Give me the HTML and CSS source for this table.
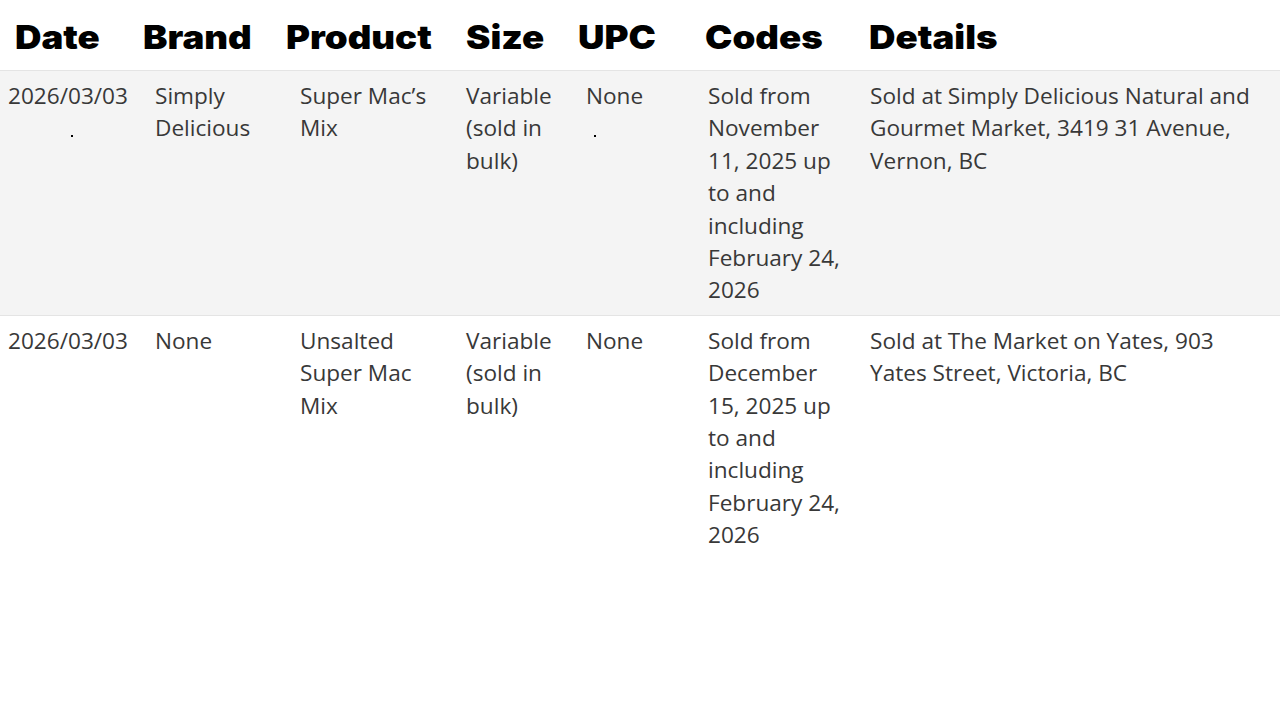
FILE: index.html
```html
<!DOCTYPE html>
<html lang="en">
<head>
<meta charset="utf-8">
<title>Recalls</title>
<link rel="stylesheet" href="styles.css">
</head>
<body>
<div class="table">
  <div class="head">
    <div class="h"><span class="ht">Date</span></div>
    <div class="h"><span class="ht">Brand</span></div>
    <div class="h"><span class="ht">Product</span></div>
    <div class="h"><span class="ht">Size</span></div>
    <div class="h"><span class="ht">UPC</span></div>
    <div class="h"><span class="ht">Codes</span></div>
    <div class="h"><span class="ht">Details</span></div>
  </div>
  <div class="row shaded">
    <div class="c">2026/03/03<span class="speck date-speck"></span></div>
    <div class="c">Simply Delicious</div>
    <div class="c">Super Mac’s Mix</div>
    <div class="c">Variable (sold in bulk)</div>
    <div class="c">None<span class="speck upc-speck"></span></div>
    <div class="c">Sold from November 11, 2025 up to and including February 24, 2026</div>
    <div class="c">Sold at Simply Delicious Natural and Gourmet Market, 3419 31 Avenue, Vernon, BC</div>
  </div>
  <div class="row last">
    <div class="c">2026/03/03</div>
    <div class="c">None</div>
    <div class="c">Unsalted Super Mac Mix</div>
    <div class="c">Variable (sold in bulk)</div>
    <div class="c">None</div>
    <div class="c">Sold from December 15, 2025 up to and including February 24, 2026</div>
    <div class="c">Sold at The Market on Yates, 903 Yates Street, Victoria, BC</div>
  </div>
</div>
</body>
</html>
```
FILE: styles.css
```css
html, body {
  margin: 0;
  padding: 0;
  background: #ffffff;
}
.table {
  width: 1280px;
}
.head {
  display: grid;
  grid-template-columns: 128px 143px 180px 112px 127px 164px 1fr;
  height: 71px;
  align-items: center;
  padding-left: 15px;
  box-sizing: border-box;
  border-bottom: 1px solid #e4e4e4;
}
.h {
  font-family: Inter, "Liberation Sans", sans-serif;
  font-weight: 900;
  font-size: 33px;
  color: #000;
  line-height: 1;
  padding-top: 4px;
}
.ht {
  display: inline-block;
  transform: scaleX(1.11);
  transform-origin: left center;
}
.row {
  display: grid;
  grid-template-columns: 147px 145px 166px 120px 122px 162px 1fr;
  padding: 9px 0 8px 8px;
  border-bottom: 1px solid #e4e4e4;
}
.row.shaded {
  background: #f4f4f4;
}
.row.last {
  border-bottom: none;
}
.c {
  font-family: "Open Sans", "Noto Sans", sans-serif;
  font-size: 22.6px;
  line-height: 32.4px;
  color: #383838;
  padding-right: 22px;
}
.speck {
  display: block;
  width: 2px;
  height: 2px;
  margin-top: 23px;
  background: #000;
}
.date-speck {
  margin-left: 63px;
}
.upc-speck {
  margin-left: 8px;
}
```
